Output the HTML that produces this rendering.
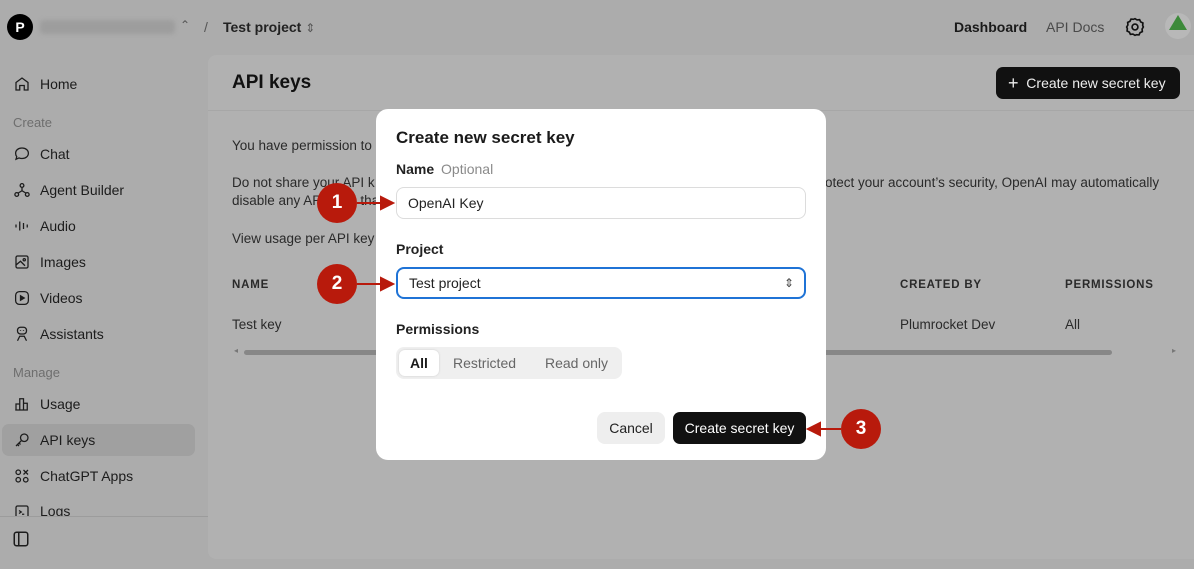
<!DOCTYPE html>
<html><head><meta charset="utf-8"><style>
*{box-sizing:border-box;margin:0;padding:0}
body{width:1194px;height:569px;overflow:hidden;background:#acacac;font-family:"Liberation Sans",sans-serif;color:#1a1a1a;position:relative}
.abs{position:absolute}
.nav{position:absolute;left:13px;font-size:14px;color:#1c1c1c;display:flex;align-items:center;gap:9px}
.nav svg{width:18px;height:18px;fill:none;stroke:#1c1c1c;stroke-width:1.7}
.sec{position:absolute;left:13px;font-size:13px;color:#6e6e6e}
.main{position:absolute;left:208px;top:55px;width:986px;height:504px;background:#b1b1b1;border-radius:8px 0 0 8px}
.t{position:absolute;font-size:13.5px;color:#2a2a2a;white-space:nowrap}
.hd{position:absolute;font-size:11.5px;font-weight:bold;letter-spacing:.8px;color:#2a2a2a}
.modal{position:absolute;left:376px;top:109px;width:450px;height:351px;background:#fff;border-radius:12px}
.lbl{position:absolute;left:20px;font-size:14px;font-weight:bold;color:#222}
.inp{position:absolute;left:20px;width:410px;height:32px;border:1px solid #dcdcdc;border-radius:8px;font-size:14px;padding:0 11px;line-height:30px;color:#222}
.badge{position:absolute;width:40px;height:40px;border-radius:50%;background:#b81a0c;color:#fff;font-weight:bold;font-size:19px;text-align:center;line-height:40px}
</style></head><body>
<!-- top bar -->
<div class="abs" style="left:7px;top:14px;width:26px;height:26px;border-radius:50%;background:#000;color:#fff;font-size:14px;font-weight:bold;text-align:center;line-height:26px">P</div>
<div class="abs" style="left:40px;top:20px;width:135px;height:14px;background:#9d9d9d;border-radius:4px;filter:blur(2px)"></div>
<div class="abs" style="left:180px;top:18px;font-size:12px;color:#555">⌃</div>
<div class="abs" style="left:204px;top:19px;font-size:14px;color:#555">/</div>
<div class="abs" style="left:223px;top:19px;font-size:14px;font-weight:bold;color:#222">Test project <span style="font-weight:normal;color:#555;font-size:12px">⇕</span></div>
<div class="abs" style="left:954px;top:19px;font-size:14px;font-weight:bold;color:#1a1a1a">Dashboard</div>
<div class="abs" style="left:1046px;top:19px;font-size:14px;color:#4a4a4a">API Docs</div>
<svg class="abs" style="left:1125px;top:17px" width="20" height="20" viewBox="0 0 24 24" fill="none" stroke="#111" stroke-width="2"><path d="M12 2l2.5 1.5 3-.3 1.3 2.7 2.7 1.3-.3 3L22 12l-1.5 2.5.3 3-2.7 1.3-1.3 2.7-3-.3L12 22l-2.5-1.5-3 .3-1.3-2.7-2.7-1.3.3-3L2 12l1.5-2.5-.3-3 2.7-1.3 1.3-2.7 3 .3z"/><circle cx="12" cy="12" r="3.5"/></svg>
<div class="abs" style="left:1165px;top:13px;width:26px;height:26px;border-radius:50%;background:#b8b8b8"></div>
<svg class="abs" style="left:1168px;top:14px" width="20" height="18"><polygon points="10,1 19,16 1,16" fill="#3d8a3a"/></svg>

<!-- sidebar -->
<div class="nav" style="top:75px"><svg viewBox="0 0 24 24"><path d="M4 10l8-6 8 6v10h-5v-6H9v6H4z"/></svg>Home</div>
<div class="sec" style="top:115px">Create</div>
<div class="nav" style="top:145px"><svg viewBox="0 0 24 24"><path d="M12 4c5 0 8.5 3 8.5 7s-3.5 7-8.5 7c-1.5 0-3-.3-4-.8L4 19l1-3.5C4 14.3 3.5 12.8 3.5 11 3.5 7 7 4 12 4z"/></svg>Chat</div>
<div class="nav" style="top:181px"><svg viewBox="0 0 24 24"><circle cx="12" cy="6" r="2.5"/><circle cx="5" cy="18" r="2.5"/><circle cx="19" cy="18" r="2.5"/><path d="M12 9v4M7 16l5-3 5 3"/></svg>Agent Builder</div>
<div class="nav" style="top:217px"><svg viewBox="0 0 24 24"><path d="M4 10v4M9 6v12M14 8v8M19 10v4"/></svg>Audio</div>
<div class="nav" style="top:253px"><svg viewBox="0 0 24 24"><rect x="4" y="4" width="16" height="16" rx="2"/><circle cx="15" cy="9" r="1.5"/><path d="M4 16l6-5 6 6"/></svg>Images</div>
<div class="nav" style="top:289px"><svg viewBox="0 0 24 24"><rect x="3.5" y="3.5" width="17" height="17" rx="5"/><path d="M10 9l5 3-5 3z" fill="#1c1c1c"/></svg>Videos</div>
<div class="nav" style="top:325px"><svg viewBox="0 0 24 24"><rect x="6" y="3" width="12" height="9" rx="4"/><path d="M10 7v1M14 7v1M6 21l3-6h6l3 6"/></svg>Assistants</div>
<div class="sec" style="top:365px">Manage</div>
<div class="nav" style="top:395px"><svg viewBox="0 0 24 24"><path d="M4 20V12h5v8M9 20V5h5v15M14 20v-9h5v9H3"/></svg>Usage</div>
<div class="abs" style="left:2px;top:424px;width:193px;height:32px;background:#a0a0a0;border-radius:7px"></div>
<div class="nav" style="top:431px"><svg viewBox="0 0 24 24"><circle cx="15" cy="9" r="5"/><path d="M11 13l-7 7M6 18l2 2M8 16l2 2"/></svg>API keys</div>
<div class="nav" style="top:467px"><svg viewBox="0 0 24 24"><circle cx="7" cy="7" r="3"/><circle cx="17" cy="17" r="3"/><circle cx="7" cy="17" r="3"/><path d="M14 4l6 6M20 4l-6 6"/></svg>ChatGPT Apps</div>
<div class="nav" style="top:503px;height:14px;overflow:hidden;align-items:flex-start"><svg viewBox="0 0 24 24"><rect x="4" y="4" width="16" height="16" rx="2"/><path d="M8 10l3 2-3 2M12 15h3"/></svg>Logs</div>
<div class="abs" style="left:0;top:516px;width:208px;height:1px;background:#9c9c9c"></div>
<svg class="abs" style="left:12px;top:530px" width="18" height="18" viewBox="0 0 24 24" fill="none" stroke="#1c1c1c" stroke-width="2"><rect x="3" y="3" width="18" height="18" rx="3"/><path d="M9 3v18"/></svg>

<!-- main -->
<div class="main"></div>
<div class="abs" style="left:208px;top:110px;width:986px;height:1px;background:#a7a7a7"></div>
<div class="abs" style="left:232px;top:72px;font-size:19px;font-weight:bold;color:#111">API keys</div>
<div class="abs" style="left:996px;top:67px;width:184px;height:32px;background:#111;border-radius:7px;color:#eee;font-size:14px;line-height:32px;padding-left:12px"><span style="font-size:18px;vertical-align:-1px">+</span>&nbsp; Create new secret key</div>
<div class="t" style="left:232px;top:138px">You have permission to</div>
<div class="t" style="left:232px;top:175px">Do not share your API k</div>
<div class="t" style="left:232px;top:193px">disable any API keys tha</div>
<div class="t" style="left:825px;top:175px">otect your account’s security, OpenAI may automatically</div>
<div class="t" style="left:232px;top:231px">View usage per API key</div>
<div class="hd" style="left:232px;top:279px">NAME</div>
<div class="hd" style="left:900px;top:279px">CREATED BY</div>
<div class="hd" style="left:1065px;top:279px">PERMISSIONS</div>
<div class="t" style="left:232px;top:317px">Test key</div>
<div class="t" style="left:900px;top:317px">Plumrocket Dev</div>
<div class="t" style="left:1065px;top:317px">All</div>
<div class="abs" style="left:244px;top:350px;width:868px;height:5px;background:#878787;border-radius:3px"></div>
<div class="abs" style="left:234px;top:346px;font-size:8px;color:#777">◂</div>
<div class="abs" style="left:1172px;top:346px;font-size:8px;color:#777">▸</div>

<!-- modal -->
<div class="modal">
<div class="abs" style="left:20px;top:19px;font-size:17px;font-weight:bold;color:#1a1a1a">Create new secret key</div>
<div class="lbl" style="top:52px">Name <span style="font-weight:normal;color:#8a8a8a;margin-left:3px">Optional</span></div>
<div class="inp" style="top:78px">OpenAI Key</div>
<div class="lbl" style="top:132px">Project</div>
<div class="inp" style="top:158px;border:2px solid #1f73d6;line-height:28px">Test project<span style="position:absolute;right:10px;top:0;font-size:12px;color:#444">⇕</span></div>
<div class="lbl" style="top:212px">Permissions</div>
<div class="abs" style="left:20px;top:238px;width:226px;height:32px;background:#efefef;border-radius:8px"></div>
<div class="abs" style="left:23px;top:241px;width:40px;height:26px;background:#fff;border-radius:6px;box-shadow:0 0 2px #ccc;font-size:14px;font-weight:bold;text-align:center;line-height:26px">All</div>
<div class="abs" style="left:77px;top:246px;font-size:14px;color:#666">Restricted</div>
<div class="abs" style="left:169px;top:246px;font-size:14px;color:#666">Read only</div>
<div class="abs" style="left:221px;top:303px;width:68px;height:32px;background:#eeeeee;border-radius:8px;font-size:14px;text-align:center;line-height:32px;color:#222">Cancel</div>
<div class="abs" style="left:297px;top:303px;width:133px;height:32px;background:#111;border-radius:7px;font-size:14px;text-align:center;line-height:32px;color:#fff">Create secret key</div>
</div>

<!-- annotations -->
<div class="badge" style="left:317px;top:183px">1</div>
<div class="badge" style="left:317px;top:264px">2</div>
<div class="badge" style="left:841px;top:409px">3</div>
<svg class="abs" style="left:0;top:0" width="1194" height="569">
<g stroke="#b81a0c" stroke-width="2" fill="#b81a0c">
<line x1="357" y1="203" x2="382" y2="203"/><polygon points="393,203 381,197 381,209"/>
<line x1="357" y1="284" x2="382" y2="284"/><polygon points="393,284 381,278 381,290"/>
<line x1="841" y1="429" x2="820" y2="429"/><polygon points="808,429 820,423 820,435"/>
</g></svg>
</body></html>
